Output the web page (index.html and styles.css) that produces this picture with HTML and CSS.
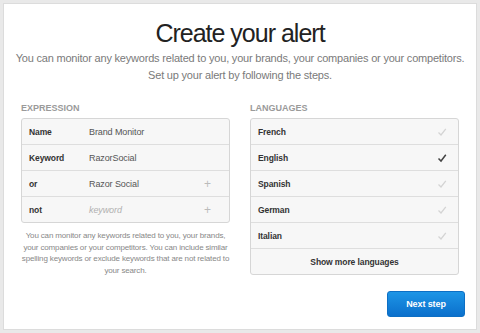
FILE: index.html
```html
<!DOCTYPE html>
<html>
<head>
<meta charset="utf-8">
<link rel="stylesheet" href="styles.css">
</head>
<body>
<div class="card">
  <h1 class="title">Create your alert</h1>
  <p class="subtitle">You can monitor any keywords related to you, your brands, your companies or your competitors.<br>Set up your alert by following the steps.</p>
  <div class="columns">
    <div class="col">
      <div class="label">EXPRESSION</div>
      <div class="table">
        <div class="row"><span class="key">Name</span><span class="val">Brand Monitor</span></div>
        <div class="row"><span class="key">Keyword</span><span class="val">RazorSocial</span></div>
        <div class="row"><span class="key">or</span><span class="val">Razor Social</span><span class="plus">+</span></div>
        <div class="row"><span class="key">not</span><span class="val ph">keyword</span><span class="plus">+</span></div>
      </div>
      <p class="help">You can monitor any keywords related to you, your brands, your companies or your competitors. You can include similar spelling keywords or exclude keywords that are not related to your search.</p>
    </div>
    <div class="col">
      <div class="label">LANGUAGES</div>
      <div class="table">
        <div class="row lang"><span class="key">French</span><svg class="check" viewBox="0 0 10 10"><path d="M1.5 5.5 L4 8 L8.8 1.8"/></svg></div>
        <div class="row lang"><span class="key">English</span><svg class="check on" viewBox="0 0 10 10"><path d="M1.5 5.5 L4 8 L8.8 1.8"/></svg></div>
        <div class="row lang"><span class="key">Spanish</span><svg class="check" viewBox="0 0 10 10"><path d="M1.5 5.5 L4 8 L8.8 1.8"/></svg></div>
        <div class="row lang"><span class="key">German</span><svg class="check" viewBox="0 0 10 10"><path d="M1.5 5.5 L4 8 L8.8 1.8"/></svg></div>
        <div class="row lang"><span class="key">Italian</span><svg class="check" viewBox="0 0 10 10"><path d="M1.5 5.5 L4 8 L8.8 1.8"/></svg></div>
        <div class="row more"><span class="key">Show more languages</span></div>
      </div>
    </div>
  </div>
  <div class="footer">
    <button class="next">Next step</button>
  </div>
</div>
</body>
</html>
```
FILE: styles.css
```css
html, body {
  margin: 0;
  padding: 0;
}
body {
  background: #e9e9e9;
  padding: 3px;
  font-family: "Liberation Sans", Arial, sans-serif;
}
.card {
  box-sizing: border-box;
  width: 474px;
  height: 327px;
  background: #fff;
  border: 1px solid #dcdcdc;
  padding-top: 13px;
}
.title {
  margin: 0;
  text-align: center;
  font-size: 25px;
  line-height: 32px;
  font-weight: normal;
  letter-spacing: -1px;
  color: #222;
}
.subtitle {
  margin: 1px 0 0;
  text-align: center;
  font-size: 11px;
  line-height: 17px;
  letter-spacing: -0.2px;
  color: #7a7a7a;
}
.columns {
  display: flex;
  gap: 20px;
  padding: 0 17px;
  margin-top: 18px;
}
.col {
  width: 209px;
}
.label {
  font-size: 9px;
  line-height: 12px;
  font-weight: bold;
  color: #9a9a9a;
  margin-bottom: 4px;
}
.table {
  border: 1px solid #d6d6d6;
  border-radius: 3px;
  background: #f7f7f7;
  overflow: hidden;
}
.row {
  display: flex;
  align-items: center;
  height: 25px;
  padding: 0 7px;
  font-size: 9px;
  color: #333;
}
.row + .row {
  border-top: 1px solid #dedede;
}
.key {
  font-weight: bold;
  font-size: 8.5px;
  letter-spacing: -0.1px;
  width: 60px;
  color: #333;
}
.val {
  flex: 1;
  color: #555;
  letter-spacing: -0.1px;
}
.val.ph {
  font-style: italic;
  color: #b0b0b0;
}
.plus {
  color: #bbb;
  font-size: 12px;
  margin-right: 11px;
}
.lang .key {
  flex: 1;
}
.check {
  width: 10px;
  height: 10px;
  margin-right: 4px;
  fill: none;
  stroke: #d4d4d4;
  stroke-width: 1.3;
}
.check.on {
  stroke: #444;
  stroke-width: 1.5;
}
.more {
  justify-content: center;
}
.more .key {
  width: auto;
}
.help {
  margin: 7px 0 0;
  text-align: center;
  font-size: 8px;
  line-height: 11.5px;
  letter-spacing: -0.15px;
  color: #888;
}
.footer {
  display: flex;
  justify-content: flex-end;
  padding-right: 11px;
  margin-top: 15px;
}
.next {
  width: 78px;
  height: 26px;
  border: 1px solid #0d6fc4;
  border-radius: 3px;
  background: linear-gradient(#1d95e6, #0b70cc);
  color: #fff;
  font-family: "Liberation Sans", Arial, sans-serif;
  font-weight: bold;
  font-size: 9px;
  letter-spacing: -0.1px;
  padding: 0;
}
```
